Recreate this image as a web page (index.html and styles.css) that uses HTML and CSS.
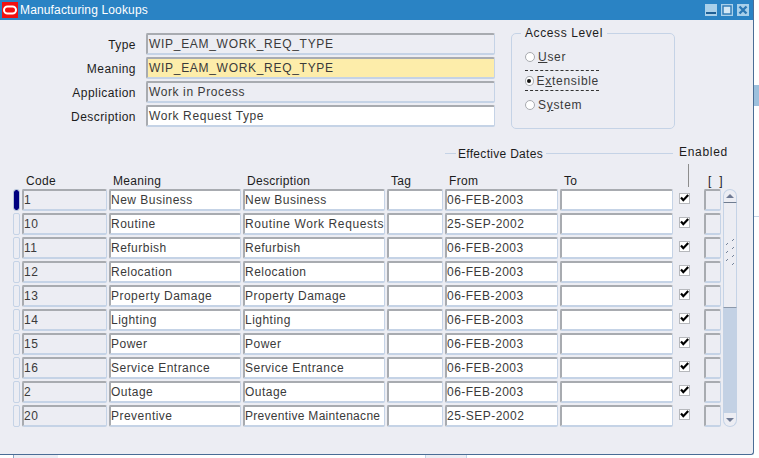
FILE: index.html
```html
<!DOCTYPE html>
<html lang="en">
<head>
    <meta charset="UTF-8">
    <meta name="viewport" content="width=device-width, initial-scale=1.0">
    <title>Manufacturing Lookups</title>
    <link rel="stylesheet" href="styles.css">
</head>
<body>
    <!-- Bits of the windows behind this one -->
    <div class="behind behind-tab-1"></div>
    <div class="behind behind-tab-2"></div>
    <div class="behind behind-strip"></div>
    <div class="behind behind-line"></div>

    <svg class="defs" width="0" height="0">
        <symbol id="check" viewBox="0 0 9 9">
            <path d="M1 3.5 L3.3 6.2 L8.2 1" fill="none" stroke="#000" stroke-width="2.2"/>
        </symbol>
    </svg>

    <div class="window">
        <div class="titlebar">
            <svg class="logo" width="16" height="16" viewBox="0 0 16 16">
                <rect width="16" height="16" fill="#f01010"/>
                <rect x="2" y="4.5" width="12" height="7" rx="3.5" fill="none" stroke="#fff" stroke-width="2"/>
            </svg>
            <span class="title">Manufacturing Lookups</span>
            <div class="buttons">
                <svg width="12" height="12" viewBox="0 0 12 12">
                    <rect width="12" height="12" fill="#a9d0ea"/>
                    <rect x="1" y="8" width="10" height="2" fill="#1d5f96"/>
                </svg>
                <svg width="12" height="12" viewBox="0 0 12 12">
                    <rect width="12" height="12" fill="#a9d0ea"/>
                    <rect x="2" y="2" width="8" height="8" fill="#d4e8f5" stroke="#2c78b4" stroke-width="1.4"/>
                </svg>
                <svg width="12" height="12" viewBox="0 0 12 12">
                    <rect width="12" height="12" fill="#a9d0ea"/>
                    <path d="M2.5 2.5 L9.5 9.5 M9.5 2.5 L2.5 9.5" stroke="#2c78b4" stroke-width="2.4"/>
                </svg>
            </div>
        </div>

        <div class="content">
            <div class="top">
                <div class="form">
                    <label>Type</label>
                    <div class="field readonly caps">WIP_EAM_WORK_REQ_TYPE</div>
                    <label>Meaning</label>
                    <div class="field current caps">WIP_EAM_WORK_REQ_TYPE</div>
                    <label>Application</label>
                    <div class="field readonly">Work in Process</div>
                    <label>Description</label>
                    <div class="field">Work Request Type</div>
                </div>

                <fieldset class="access">
                    <legend>Access Level</legend>
                    <div class="radio"><span class="dot"></span><span><u>U</u>ser</span></div>
                    <div class="radio focused"><span class="dot on"></span><span>E<u>x</u>tensible</span></div>
                    <div class="radio"><span class="dot"></span><span>S<u>y</u>stem</span></div>
                </fieldset>
            </div>

            <div class="band cols">
                <div class="dates"><span>Effective Dates</span></div>
                <div class="enabled">Enabled</div>
            </div>

            <div class="heads cols">
                <div></div>
                <div class="head">Code</div>
                <div class="head">Meaning</div>
                <div class="head">Description</div>
                <div class="head">Tag</div>
                <div class="head">From</div>
                <div class="head">To</div>
                <div class="enabled-tick"></div>
                <div class="head brackets">[ ]</div>
            </div>

            <div class="rows cols">
                <div class="marker active"></div><div class="field readonly">1</div><div class="field">New Business</div><div class="field">New Business</div><div class="field"></div><div class="field">06-FEB-2003</div><div class="field"></div><div class="check"><span class="box"><svg width="9" height="9"><use href="#check"/></svg></span></div><div class="field readonly"></div>

                <div class="scrollbar">
                    <div class="scroll-cap up"><span class="arrow-up"></span></div>
                    <div class="thumb">
                        <svg width="8" height="28" viewBox="0 0 8 28">
                            <path d="M8 0 L6 2 M2 4 L0 6 M8 8 L6 10 M2 12 L0 14 M8 16 L6 18 M2 20 L0 22 M8 24 L6 26" stroke="#75849b" stroke-width="1" fill="none"/>
                        </svg>
                    </div>
                    <div class="track"></div>
                    <div class="scroll-cap down"><span class="arrow-down"></span></div>
                </div>

                <div class="marker"></div><div class="field readonly">10</div><div class="field">Routine</div><div class="field wide">Routine Work Requests</div><div class="field"></div><div class="field">25-SEP-2002</div><div class="field"></div><div class="check"><span class="box"><svg width="9" height="9"><use href="#check"/></svg></span></div><div class="field readonly"></div>

                <div class="marker"></div><div class="field readonly">11</div><div class="field">Refurbish</div><div class="field">Refurbish</div><div class="field"></div><div class="field">06-FEB-2003</div><div class="field"></div><div class="check"><span class="box"><svg width="9" height="9"><use href="#check"/></svg></span></div><div class="field readonly"></div>

                <div class="marker"></div><div class="field readonly">12</div><div class="field">Relocation</div><div class="field">Relocation</div><div class="field"></div><div class="field">06-FEB-2003</div><div class="field"></div><div class="check"><span class="box"><svg width="9" height="9"><use href="#check"/></svg></span></div><div class="field readonly"></div>

                <div class="marker"></div><div class="field readonly">13</div><div class="field">Property Damage</div><div class="field">Property Damage</div><div class="field"></div><div class="field">06-FEB-2003</div><div class="field"></div><div class="check"><span class="box"><svg width="9" height="9"><use href="#check"/></svg></span></div><div class="field readonly"></div>

                <div class="marker"></div><div class="field readonly">14</div><div class="field">Lighting</div><div class="field">Lighting</div><div class="field"></div><div class="field">06-FEB-2003</div><div class="field"></div><div class="check"><span class="box"><svg width="9" height="9"><use href="#check"/></svg></span></div><div class="field readonly"></div>

                <div class="marker"></div><div class="field readonly">15</div><div class="field">Power</div><div class="field">Power</div><div class="field"></div><div class="field">06-FEB-2003</div><div class="field"></div><div class="check"><span class="box"><svg width="9" height="9"><use href="#check"/></svg></span></div><div class="field readonly"></div>

                <div class="marker"></div><div class="field readonly">16</div><div class="field">Service Entrance</div><div class="field">Service Entrance</div><div class="field"></div><div class="field">06-FEB-2003</div><div class="field"></div><div class="check"><span class="box"><svg width="9" height="9"><use href="#check"/></svg></span></div><div class="field readonly"></div>

                <div class="marker"></div><div class="field readonly">2</div><div class="field">Outage</div><div class="field">Outage</div><div class="field"></div><div class="field">06-FEB-2003</div><div class="field"></div><div class="check"><span class="box"><svg width="9" height="9"><use href="#check"/></svg></span></div><div class="field readonly"></div>

                <div class="marker"></div><div class="field readonly">20</div><div class="field">Preventive</div><div class="field narrow">Preventive Maintenacne</div><div class="field"></div><div class="field">25-SEP-2002</div><div class="field"></div><div class="check"><span class="box"><svg width="9" height="9"><use href="#check"/></svg></span></div><div class="field readonly"></div>
            </div>
        </div>
    </div>
</body>
</html>
```

FILE: styles.css
```css
body {
    margin: 0;
    height: 458px;
    overflow: hidden;
    background-color: #fff;
    font-family: "Liberation Sans", Arial, sans-serif;
    font-size: 12px;
    line-height: 14px;
    letter-spacing: 0.7px;
    color: #1c1c1c;
}

.defs {
    position: absolute;
}

.behind {
    position: absolute;
}

.behind-tab-1 {
    left: 13px;
    top: 455px;
    width: 44px;
    height: 3px;
    background-color: #ecedf3;
    border-left: 1px solid #8ea6c2;
}

.behind-tab-2 {
    left: 425px;
    top: 455px;
    width: 40px;
    height: 3px;
    background-color: #ecedf3;
    border-left: 1px solid #c5d3e6;
    border-right: 1px solid #c5d3e6;
}

.behind-strip {
    left: 754px;
    top: 85px;
    width: 5px;
    height: 21px;
    background-color: #9cc0dd;
}

.behind-line {
    left: 754px;
    top: 216px;
    width: 5px;
    height: 1px;
    background-color: #c5d3e6;
}

.window {
    width: 753px;
    height: 454px;
    background-color: #ecedf3;
    border-right: 1px solid #4a6d96;
    border-bottom: 1px solid #4a6d96;
    border-bottom-right-radius: 3px;
}

.titlebar {
    display: flex;
    align-items: center;
    height: 20px;
    padding-left: 2px;
    background-color: #2a83c4;
}

.title {
    margin-left: 2px;
    color: #fff;
    letter-spacing: 0.15px;
}

.buttons {
    display: flex;
    gap: 4px;
    margin-left: auto;
    margin-right: 4px;
}

.content {
    padding: 13px 0 0 13px;
}

.top {
    display: flex;
    height: 95px;
}

.form {
    display: grid;
    grid-template-columns: 123px 349px;
    grid-auto-rows: 22px;
    column-gap: 10px;
    row-gap: 2px;
}

.form label {
    text-align: right;
    line-height: 25px;
    letter-spacing: 0.45px;
}

.field {
    box-sizing: border-box;
    height: 22px;
    background-color: #fff;
    border-style: solid;
    border-width: 2px 1px 2px 2px;
    border-color: #a8abb0 #c5d3e6 #c5d3e6 #a8abb0;
    border-radius: 2px;
    line-height: 19px;
    letter-spacing: 0.48px;
    color: #3a3a3a;
    white-space: nowrap;
    overflow: hidden;
}

.form .field {
    padding-left: 1px;
    letter-spacing: 0.6px;
}

.form .field.caps {
    letter-spacing: 0.7px;
}

.field.readonly {
    background-color: #ecedf3;
}

.field.current {
    background-color: #fdedaa;
}

.field.wide {
    letter-spacing: 0.6px;
}

.field.narrow {
    letter-spacing: 0.3px;
}

.access {
    box-sizing: border-box;
    width: 164px;
    height: 103px;
    margin: -7px 0 0 16px;
    padding: 0 0 0 13px;
    border: 1px solid #c5d3e6;
    border-radius: 5px;
}

.access legend {
    padding: 0 4px 0 4px;
    margin-left: -4px;
    letter-spacing: 0.6px;
}

.radio {
    display: flex;
    align-items: center;
    gap: 3px;
    width: 74px;
    height: 24px;
    box-sizing: border-box;
    color: #3a3a3a;
}

.radio:first-of-type {
    margin-top: 5px;
}

.radio.focused {
    height: 21px;
    margin: 1px 0 2px;
    border-top: 1px dashed #333;
    border-bottom: 1px dashed #333;
}

.dot {
    box-sizing: border-box;
    display: flex;
    align-items: center;
    justify-content: center;
    width: 10px;
    height: 10px;
    background-color: #fff;
    border: 1px solid #a8abb0;
    border-radius: 50%;
}

.dot.on::after {
    content: "";
    width: 4px;
    height: 4px;
    background-color: #111;
    border-radius: 50%;
}

.cols {
    display: grid;
    grid-template-columns: 7px 85px 132px 142px 56px 113px 113px 27px 17px 14px;
    column-gap: 2px;
}

.band {
    margin-top: 17px;
    height: 16px;
}

.dates {
    grid-column: 6 / span 2;
    display: flex;
    align-items: flex-end;
    gap: 3px;
}

.dates span {
    padding-left: 13px;
    margin-left: -1px;
    letter-spacing: 0.3px;
}

.dates::after {
    content: "";
    flex: 1;
    height: 1px;
    margin-bottom: 7px;
    background-color: #c5d3e6;
}

.dates::before {
    content: "";
    width: 11px;
    height: 1px;
    margin-bottom: 7px;
    margin-right: -13px;
    background-color: #c5d3e6;
}

.enabled {
    grid-column: 8 / span 3;
    padding-left: 4px;
}

.heads {
    height: 27px;
    margin-bottom: 1px;
    align-items: end;
}

.head {
    padding-left: 4px;
    white-space: nowrap;
    letter-spacing: 0.3px;
}

.head.brackets {
    word-spacing: 4px;
}

.enabled-tick {
    width: 1px;
    height: 23px;
    margin-left: 13px;
    margin-bottom: 1px;
    background-color: #8d8d8d;
}

.rows {
    grid-auto-rows: 22px;
    row-gap: 2px;
}

.marker {
    box-sizing: border-box;
    border: 1px solid #c5d3e6;
    border-radius: 2px;
}

.marker.active {
    background-color: #00007f;
    background-clip: padding-box;
    border-color: #b4c3d8;
    border-radius: 3px;
}

.check {
    display: flex;
    align-items: flex-start;
    padding-left: 4px;
    padding-top: 4px;
}

.box {
    box-sizing: border-box;
    display: flex;
    align-items: center;
    justify-content: center;
    width: 11px;
    height: 11px;
    background-color: #fff;
    border: 1px solid #b6b8bc;
}

.scrollbar {
    grid-column: 10;
    grid-row: 1 / span 10;
    display: flex;
    flex-direction: column;
    box-sizing: border-box;
    height: 238px;
}

.scroll-cap {
    box-sizing: border-box;
    display: flex;
    justify-content: center;
    height: 14px;
    border: 1px solid #c5d3e6;
}

.scroll-cap.up {
    align-items: center;
    border-bottom: 1px solid #6f7c90;
    border-radius: 7px 7px 0 0;
}

.scroll-cap.down {
    align-items: center;
    border-top: none;
    border-radius: 0 0 7px 7px;
}

.arrow-up {
    border: 4px solid transparent;
    border-top: none;
    border-bottom: 4px solid #6f7a94;
}

.arrow-down {
    border: 4px solid transparent;
    border-bottom: none;
    border-top: 4px solid #6f7a94;
}

.thumb {
    box-sizing: border-box;
    display: flex;
    align-items: center;
    justify-content: center;
    height: 105px;
    padding-bottom: 4px;
    border-left: 1px solid #c5d3e6;
    border-right: 1px solid #c5d3e6;
    border-bottom: 1px solid #8d99ab;
}

.track {
    flex: 1;
    background-color: #c3d1e4;
}
```
